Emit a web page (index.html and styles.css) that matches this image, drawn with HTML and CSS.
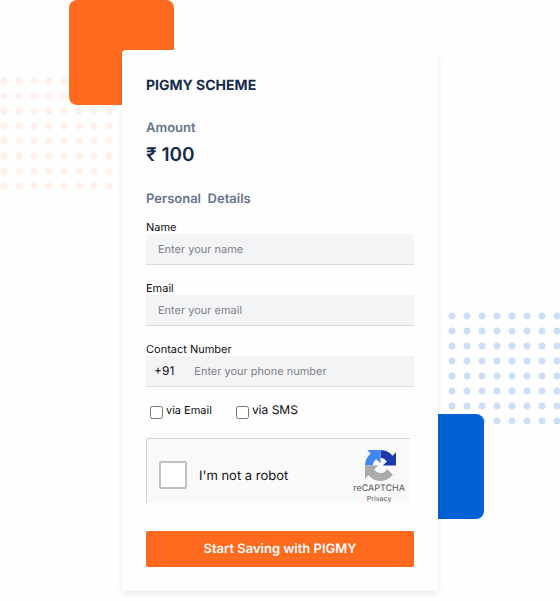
FILE: index.html
```
<!DOCTYPE html>
<html lang="en">
<head>
    <meta charset="UTF-8">
    <meta name="viewport" content="width=device-width, initial-scale=1.0">
    <title>Pigmy Scheme</title>
    <link rel="stylesheet" href="styles.css">
</head>
<body>
    <main class="page">
        <!-- decoration behind the card -->
        <div class="dots dots-orange"></div>
        <div class="square square-orange"></div>
        <div class="dots dots-blue"></div>
        <div class="square square-blue"></div>

        <form class="card" method="POST">
            <h1>PIGMY SCHEME</h1>
            <h2>Amount</h2>
            <p class="amount">₹ 100</p>
            <h2 class="details">Personal&nbsp; Details</h2>

            <div class="field">
                <label for="name">Name</label>
                <input type="text" id="name" name="name" placeholder="Enter your name">
            </div>
            <div class="field">
                <label for="email">Email</label>
                <input type="email" id="email" name="email" placeholder="Enter your email">
            </div>
            <div class="field">
                <label for="phone">Contact Number</label>
                <div class="phone">
                    <span class="code">+91</span>
                    <input type="tel" id="phone" name="phone" placeholder="Enter your phone number">
                </div>
            </div>

            <div class="options">
                <label for="via_email"><input type="checkbox" id="via_email" name="via_email">via Email</label>
                <label for="via_sms" class="sms"><input type="checkbox" id="via_sms" name="via_sms">via SMS</label>
            </div>

            <div class="captcha">
                <input type="checkbox" id="robot" name="robot">
                <label for="robot">I'm not a robot</label>
                <div class="brand">
                    <svg width="31" height="31" viewBox="0 0 64 64" aria-hidden="true">
                        <path fill="#1c3aa9" d="M64 31.955l-.013-1.37V4.687l-7.16 7.16C50.967 4.674 42.035.092 32.035.092v16.262c.488 0 .865.057 1.142.164 5.007.395 9.346 3.158 11.9 7.168l-8.307 8.307L64 31.953"/>
                        <path fill="#4285f4" d="M32.035.094H4.594l7.16 7.16C4.58 13.127 0 22.06 0 32.06h16.26c0-.488.057-.865.164-1.142.395-5.007 3.158-9.346 7.168-11.9l8.443 8.307z"/>
                        <path fill="#ababab" d="M.001 32.045l.013 1.37v25.898l7.16-7.16c5.86 7.173 14.792 11.755 24.792 11.755 10.4 0 19.651-4.96 25.494-12.64L45.724 39.408a15.55 15.55 0 0 1-4.754 5.334c-2.05 1.6-4.952 2.906-8.993 2.906-.488 0-.865-.057-1.142-.164-5.007-.395-9.346-3.158-11.9-7.168l8.307-8.307L0 32.045"/>
                    </svg>
                    <span class="brand-name">reCAPTCHA</span>
                    <a href="#">Privacy</a>
                </div>
            </div>

            <button type="submit">Start Saving with PIGMY</button>
        </form>
    </main>
</body>
</html>
```
FILE: styles.css
```
* {
    padding: 0;
    margin: 0;
    box-sizing: border-box;
}

:root {
    --orange: #ff6a1f;
    --blue: #0060d4;
    --dark: #172b4d;
    --muted: #67738b;
    --field: #f3f4f6;
}

body {
    font-family: Inter, "Noto Sans", sans-serif;
    font-size: 11px;
    text-rendering: geometricPrecision;
    background-color: #fefefe;
    color: #111;
    overflow-x: hidden;
}

.page {
    position: relative;
    max-width: 316px;
    margin: 0 auto;
    padding: 50px 0 10px;
}

.card {
    position: relative;
    display: flex;
    flex-direction: column;
    padding: 24px;
    background-color: #fefefe;
    border-radius: 4px;
    box-shadow: 0 3px 6px rgba(0, 0, 0, 0.08);
}

.square {
    position: absolute;
    width: 105px;
    height: 105px;
    border-radius: 8px;
}

.square-orange {
    top: 0;
    left: -53px;
    background-color: var(--orange);
}

.square-blue {
    top: 414px;
    right: -46px;
    background-color: var(--blue);
}

.dots {
    position: absolute;
    width: 112px;
    height: 112px;
    background-size: 15px 15px;
}

.dots-orange {
    top: 77px;
    left: -122px;
    background-image: radial-gradient(circle at 4px 4px, #fff0ea 3px, transparent 4px);
}

.dots-blue {
    top: 312px;
    right: -122px;
    background-image: radial-gradient(circle at 4px 4px, #ccdff7 3px, transparent 4px);
}

h1 {
    font-size: 14px;
    font-weight: 700;
    line-height: 24px;
    margin-bottom: 20px;
    color: var(--dark);
}

h2 {
    font-size: 13px;
    font-weight: 600;
    line-height: 20px;
    color: var(--muted);
}

.amount {
    font-size: 19px;
    font-weight: 600;
    line-height: 34px;
    margin-bottom: 17px;
    color: var(--dark);
}

.details {
    margin-bottom: 11px;
}

.field {
    display: flex;
    flex-direction: column;
    margin-bottom: 16px;
}

.field label {
    line-height: 14px;
}

.field input {
    width: 100%;
    height: 31px;
    padding: 0 12px;
    font-family: inherit;
    font-size: 11px;
    text-rendering: inherit;
    background-color: var(--field);
    border: none;
    border-bottom: 1px solid #d9dbe0;
    border-radius: 0;
}

.field input::placeholder {
    color: #808186;
}

.phone {
    display: flex;
}

.code {
    padding-left: 8px;
    font-size: 12px;
    line-height: 30px;
    background-color: var(--field);
    border-bottom: 1px solid #d9dbe0;
}

.phone input {
    flex: 1;
    min-width: 0;
    padding-left: 20px;
}

.options {
    display: flex;
    gap: 24px;
    padding: 0 4px;
    margin-bottom: 19px;
}

.options label {
    display: flex;
    gap: 3px;
    line-height: 14px;
}

.options .sms {
    font-size: 12px;
}

.options input {
    width: 13px;
    height: 13px;
    margin-top: 3px;
}

.captcha {
    display: flex;
    align-items: center;
    height: 65px;
    margin-right: 4px;
    margin-bottom: 28px;
    padding: 8px 5px 0 12px;
    background-color: #f9f9f9;
    border: 1px solid #d3d3d3;
    border-width: 1px 0 0 1px;
    border-radius: 3px 0 0 0;
}

.captcha input {
    appearance: none;
    width: 28px;
    height: 28px;
    background-color: white;
    border: 2px solid #c1c1c1;
    border-radius: 2px;
}

.captcha label {
    flex: 1;
    padding: 2px 0 0 12px;
    font-size: 13px;
    line-height: 20px;
}

.brand {
    display: flex;
    flex-direction: column;
    align-items: center;
    color: #555;
}

.brand svg {
    margin: 2px 0 2px 3px;
}

.brand-name {
    font-size: 9px;
    line-height: 12px;
}

.brand a {
    font-size: 7px;
    line-height: 8px;
    color: inherit;
    text-decoration: none;
}

button {
    height: 36px;
    font-family: inherit;
    font-size: 13px;
    font-weight: 600;
    text-rendering: inherit;
    color: white;
    background-color: var(--orange);
    border: none;
    border-radius: 2px;
    cursor: pointer;
}

button:hover {
    background-color: #f05a10;
}
```
